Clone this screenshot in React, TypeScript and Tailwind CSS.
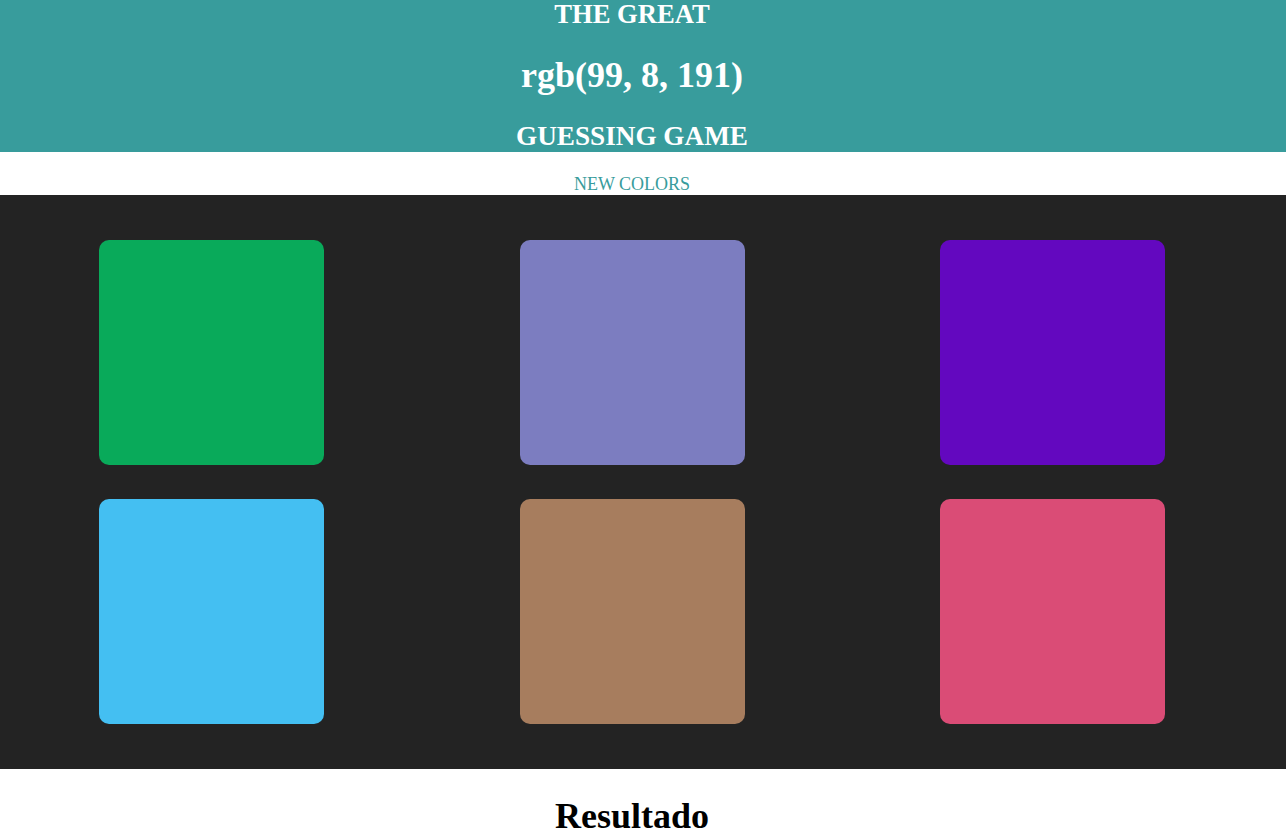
const colors = [
  "rgb(9, 170, 90)",
  "rgb(124, 125, 192)",
  "rgb(99, 8, 191)",
  "rgb(68, 191, 242)",
  "rgb(167, 125, 94)",
  "rgb(218, 76, 118)",
];

function Square({ color }: { color: string }) {
  return <div className="w-[225px] h-[225px] rounded-[10px]" style={{ backgroundColor: color }} />;
}

export default function App() {
  return (
    <div className="h-[838px] overflow-hidden bg-white font-['Liberation_Serif','Times_New_Roman',serif]">
      <header className="bg-[#389c9c] text-white font-bold text-center pr-[22px] pb-[2px]">
        <h2 className="text-[26.6px] leading-[28px]">THE GREAT</h2>
        <h1 className="text-[36px] leading-[36px] mt-[29px]">rgb(99, 8, 191)</h1>
        <h2 className="text-[27.2px] leading-[28px] mt-[29px]">GUESSING GAME</h2>
      </header>

      <div className="h-[43px] pt-[21px] text-center pr-[22px]">
        <button className="text-[18px] leading-[18px] text-[#389c9c] uppercase">New Colors</button>
      </div>

      <section className="bg-[#232323] py-[45px] pl-[99px]">
        <div className="grid grid-cols-[225px_225px_225px] gap-x-[195.5px] gap-y-[34px]">
          {colors.map((c) => (
            <Square key={c} color={c} />
          ))}
        </div>
      </section>

      <h2 className="mt-[29px] text-center pr-[22px] text-[36px] leading-[36px] font-bold text-black">
        Resultado
      </h2>
    </div>
  );
}
